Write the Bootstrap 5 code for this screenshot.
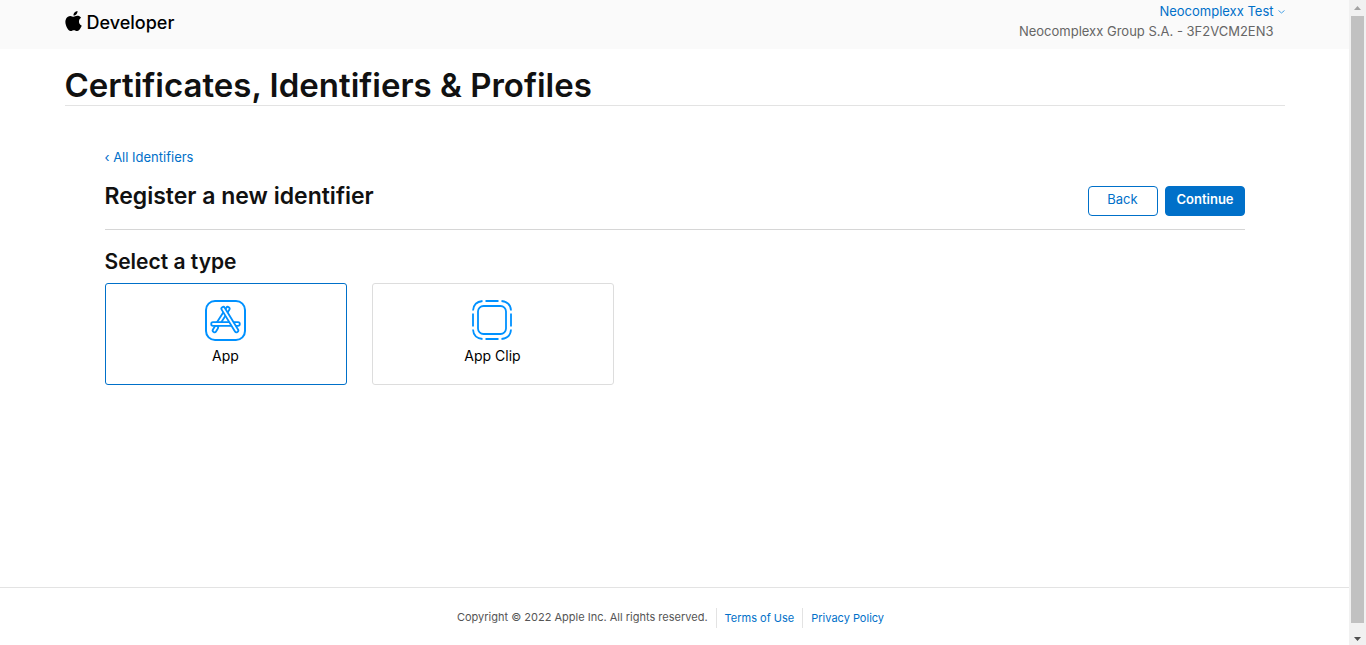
<!DOCTYPE html>
<html lang="en">
<head>
<meta charset="utf-8">
<meta name="viewport" content="width=device-width, initial-scale=1">
<title>Certificates, Identifiers &amp; Profiles</title>
<link href="https://cdn.jsdelivr.net/npm/bootstrap@5.3.0/dist/css/bootstrap.min.css" rel="stylesheet">
<style>
  :root { --accent: #0070c9; --line: #e3e3e3; }
  body { font-family: Inter, "Liberation Sans", sans-serif; font-size: 13px; line-height: 20px; color: #111; background: #fff; }
  a { color: var(--accent); text-decoration: none; }
  a:hover { text-decoration: underline; }
  .wrap { width: 100%; max-width: 1220px; margin: 0 auto; }
  .topbar { background: #fafafa; padding: 1px 0 8px; }
  .brand { color: #000; font-size: 18px; font-weight: 500; line-height: 24px; gap: 5px; padding-top: 4px; }
  .brand svg { margin-bottom: 4px; }
  .team { color: #666; margin-right: 11px; }
  .page-title { font-size: 33px; font-weight: 600; line-height: 40px; padding: 16px 0 0; border-bottom: 1px solid var(--line); }
  .content { padding: 41px 40px 40px; }
  .section-head { border-bottom: 1px solid #d6d6d6; padding: 15px 0 13px; }
  .section-head h2 { font-size: 23px; font-weight: 600; line-height: 28px; }
  .actions { gap: 7px; padding-top: 4px; }
  .action { --bs-btn-font-size: 13px; --bs-btn-line-height: 18px; --bs-btn-padding-x: 11px; --bs-btn-border-radius: 4px; padding-top: 3px; padding-bottom: 7px; }
  .action-back { --bs-btn-color: var(--accent); --bs-btn-border-color: var(--accent); --bs-btn-bg: #fff; width: 70px; }
  .action-go { --bs-btn-bg: var(--accent); --bs-btn-border-color: var(--accent); font-weight: 600; width: 80px; }
  .type-title { font-size: 21px; font-weight: 600; line-height: 26px; padding-top: 3px; }
  .types { gap: 25px; }
  .type-option { width: 242px; height: 102px; border: 1px solid #ddd; border-radius: 3px; padding-top: 16px; color: #000; font-size: 14px; cursor: pointer; }
  .btn-check:checked + .type-option { border-color: var(--accent); }
  .type-option svg { margin-bottom: 5px; }
  .site-footer { border-top: 1px solid var(--line); font-size: 11px; color: #555; padding: 20px 0 17px; }
  .foot-text { line-height: 18px; }
  .foot-link { border-left: 1px solid var(--line); padding: 0 8px; }
  .scroll-track { width: 17px; height: 100vh; background: #f1f1f1; }
  .scroll-thumb { background: #c1c1c1; margin: 0 2px; }
</style>
</head>
<body class="d-flex">
<div class="d-flex flex-column flex-grow-1 min-vh-100">
  <header class="topbar">
    <div class="wrap d-flex justify-content-between align-items-center">
      <a class="brand d-flex align-items-center" href="#">
        <svg width="17" height="20" viewBox="2 0 20 24" aria-hidden="true"><path d="M12.152 6.896c-.948 0-2.415-1.078-3.96-1.04-2.04.027-3.91 1.183-4.961 3.014-2.117 3.675-.546 9.103 1.519 12.09 1.013 1.454 2.208 3.09 3.792 3.039 1.52-.065 2.09-.987 3.935-.987 1.831 0 2.35.987 3.96.948 1.637-.026 2.676-1.48 3.676-2.948 1.156-1.688 1.636-3.325 1.662-3.415-.039-.013-3.182-1.221-3.22-4.857-.026-3.04 2.48-4.494 2.597-4.559-1.429-2.09-3.623-2.324-4.39-2.376-2-.156-3.675 1.09-4.61 1.09zM15.53 3.83c.843-1.012 1.4-2.427 1.245-3.83-1.207.052-2.662.805-3.532 1.818-.78.896-1.454 2.338-1.273 3.714 1.338.104 2.715-.688 3.559-1.701"/></svg>
        <span>Developer</span>
      </a>
      <div class="text-end">
        <a class="d-flex align-items-center justify-content-end gap-1" href="#">Neocomplexx Test
          <svg width="7" height="5" viewBox="0 0 7 5" fill="none" stroke="#4aa3e6" aria-hidden="true"><path d="M.5 1.500l3 2.500 3-2.500"/></svg></a>
        <div class="team">Neocomplexx Group S.A. - 3F2VCM2EN3</div>
      </div>
    </div>
  </header>

  <main class="wrap flex-grow-1">
    <h1 class="page-title mb-0">Certificates, Identifiers &amp; Profiles</h1>
    <div class="content">
      <a href="#">‹ All Identifiers</a>
      <div class="section-head d-flex justify-content-between">
        <h2 class="mb-0">Register a new identifier</h2>
        <div class="actions d-flex">
          <button type="button" class="btn action action-back">Back</button>
          <button type="submit" class="btn btn-primary action action-go">Continue</button>
        </div>
      </div>
      <h3 class="type-title mt-3 mb-2">Select a type</h3>
      <div class="types d-flex flex-wrap">
        <div>
          <input class="btn-check" type="radio" name="type" id="type-app" checked>
          <label class="type-option d-flex flex-column align-items-center" for="type-app">
            <svg width="41" height="41" viewBox="0 0 41 41" fill="none" stroke="#0091ff" stroke-linecap="round" aria-hidden="true">
              <rect x="1" y="1" width="39" height="39" rx="9" stroke-width="2"/>
              <path d="M11.300 27.500L9.500 30.500" stroke-width="5.400"/>
              <path d="M11.300 27.500L9.500 30.500" stroke="#fff" stroke-width="1.800"/>
              <path d="M22.800 8.700L13 24" stroke-width="5.400"/>
              <path d="M22.800 8.700L13 24" stroke="#fff" stroke-width="1.800"/>
              <path d="M8 24H33" stroke-width="5.400"/>
              <path d="M8 24H33" stroke="#fff" stroke-width="1.800"/>
              <path d="M18.200 8.700L31.500 30.500" stroke-width="5.400"/>
              <path d="M18.200 8.700L31.500 30.500" stroke="#fff" stroke-width="1.800"/>
            </svg>
            <span>App</span>
          </label>
        </div>
        <div>
          <input class="btn-check" type="radio" name="type" id="type-clip">
          <label class="type-option d-flex flex-column align-items-center" for="type-clip">
            <svg width="41" height="41" viewBox="0 0 41 41" fill="none" stroke="#0091ff" stroke-width="1.800" aria-hidden="true">
              <rect x="6" y="6" width="28" height="28" rx="5.500"/>
              <path d="M13.500 1h13M13.500 39h13M1 13.500v13M39 13.500v13M1 10.500Q1.500 2 10.500 1M29.500 1Q38.500 2 39 10.500M39 29.500Q38.500 38 29.500 39M10.500 39Q1.500 38 1 29.500"/>
            </svg>
            <span>App Clip</span>
          </label>
        </div>
      </div>
    </div>
  </main>

  <footer class="site-footer d-flex flex-wrap justify-content-center">
    <span class="foot-text pe-2">Copyright © 2022 Apple Inc. All rights reserved.</span>
    <a class="foot-link" href="#">Terms of Use</a>
    <a class="foot-link" href="#">Privacy Policy</a>
  </footer>
</div>

<div class="scroll-track sticky-top flex-shrink-0 d-flex flex-column" aria-hidden="true">
  <svg width="17" height="16" viewBox="0 0 17 16"><path d="M5 10l3.500-4 3.500 4z" fill="#a3a3a3"/></svg>
  <div class="scroll-thumb flex-grow-1"></div>
  <svg width="17" height="22" viewBox="0 0 17 22"><path d="M5 14h7l-3.500 4z" fill="#505050"/></svg>
</div>
<script src="https://cdn.jsdelivr.net/npm/bootstrap@5.3.0/dist/js/bootstrap.bundle.min.js"></script>
</body>
</html>
